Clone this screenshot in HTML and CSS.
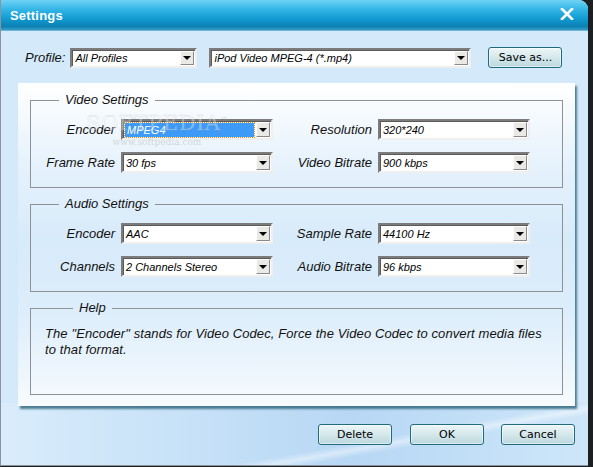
FILE: index.html
```html
<!DOCTYPE html>
<html>
<head>
<title>Settings</title>
<link rel="stylesheet" href="styles.css">
</head>
<body>

<div class="window">
  <div class="titlebar">
    <span class="title">Settings</span>
    <svg class="close" width="14" height="12" viewBox="0 0 14 12">
      <path d="M2 1 L12 11 M12 1 L2 11" stroke="#fff" stroke-width="2.6" stroke-linecap="square"/>
    </svg>
  </div>

  <div class="content">
    <div class="profile-row">
      <span class="label">Profile:</span>
      <div class="combo w-profile"><span class="value">All Profiles</span><span class="arrow"></span></div>
      <div class="combo w-preset"><span class="value">iPod Video MPEG-4 (*.mp4)</span><span class="arrow"></span></div>
      <button class="button">Save as...</button>
    </div>

    <div class="panel">
      <fieldset class="group">
        <legend>Video Settings</legend>
        <div class="grid">
          <span class="label">Encoder</span>
          <div class="combo"><span class="value selected">MPEG4</span><span class="arrow"></span></div>
          <span class="label">Resolution</span>
          <div class="combo"><span class="value">320*240</span><span class="arrow"></span></div>
          <span class="label">Frame Rate</span>
          <div class="combo"><span class="value">30 fps</span><span class="arrow"></span></div>
          <span class="label">Video Bitrate</span>
          <div class="combo"><span class="value">900 kbps</span><span class="arrow"></span></div>
        </div>
      </fieldset>

      <fieldset class="group">
        <legend>Audio Settings</legend>
        <div class="grid">
          <span class="label">Encoder</span>
          <div class="combo"><span class="value">AAC</span><span class="arrow"></span></div>
          <span class="label">Sample Rate</span>
          <div class="combo"><span class="value">44100 Hz</span><span class="arrow"></span></div>
          <span class="label">Channels</span>
          <div class="combo"><span class="value">2 Channels Stereo</span><span class="arrow"></span></div>
          <span class="label">Audio Bitrate</span>
          <div class="combo"><span class="value">96 kbps</span><span class="arrow"></span></div>
        </div>
      </fieldset>

      <fieldset class="group help">
        <legend>Help</legend>
        <p>The "Encoder" stands for Video Codec, Force the Video Codec to convert media files to that format.</p>
      </fieldset>

      <!-- watermark of the screenshot -->
      <div class="watermark">
        <span class="wm-big">SOFTPEDIA<sup>™</sup></span>
        <span class="wm-small">www.softpedia.com</span>
      </div>
    </div>

    <div class="actions">
      <button class="button">Delete</button>
      <button class="button">OK</button>
      <button class="button">Cancel</button>
    </div>
  </div>
</div>

</body>
</html>
```

FILE: styles.css
```css
body {
  margin: 0;
  background-color: #1c1f22;
  font-family: "Liberation Sans", Arial, sans-serif;
}

.window {
  width: 588px;
  height: 466px;
  box-sizing: border-box;
  border-left: 1px solid #8c9499;
  border-bottom: 1px solid #8c9499;
  border-top-right-radius: 9px;
  overflow: hidden;
  background-color: #d4eafa;
  display: flex;
  flex-direction: column;
}

.titlebar {
  height: 31px;
  flex: none;
  display: flex;
  align-items: center;
  justify-content: space-between;
  padding: 0 14px 0 9px;
  background: linear-gradient(#6fd3f6 0%, #34b6e6 30%, #129bd2 60%, #0a80b4 85%, #3b9cc6 97%, #9fd2ea 100%);
}

.title {
  color: #fff;
  font-weight: bold;
  font-size: 13px;
  letter-spacing: 0.2px;
  margin-top: -1px;
}

.close {
  display: block;
  margin-top: -3px;
}

.content {
  flex: 1;
  display: flex;
  flex-direction: column;
  background-color: #d4eafa;
  background-image:
    linear-gradient(170deg, transparent 62%, rgba(255,255,255,0.45) 66%, transparent 70%),
    linear-gradient(to right, rgba(220,238,252,0.6) 0%, rgba(160,200,240,0.55) 60%, rgba(196,224,248,0.4) 100%);
  background-size: 100% 62px, 100% 62px;
  background-position: bottom, bottom;
  background-repeat: no-repeat;
}

.label {
  font-style: italic;
  font-size: 13px;
  color: #111;
}

.profile-row {
  display: flex;
  align-items: center;
  margin-top: 16px;
  padding-left: 24px;
  height: 21px;
}

.profile-row .label {
  margin-right: 5px;
}

.w-profile {
  width: 127px;
  height: 20px !important;
}

.w-preset {
  width: 262px;
  height: 20px !important;
  margin-left: 12px;
}

.profile-row .button {
  margin-left: 17px;
}

/* combo box */
.combo {
  display: flex;
  align-items: stretch;
  height: 21px;
  box-sizing: border-box;
  border: 2px solid;
  border-color: #7c7c7c #efefef #efefef #7c7c7c;
  box-shadow: inset 1px 1px 0 #5a5a5a;
  background-color: #fff;
}

.combo .value {
  flex: 1;
  display: flex;
  align-items: center;
  padding-left: 2px;
  margin: 1px 0 0 1px;
  font-style: italic;
  font-size: 11px;
  color: #000;
  white-space: nowrap;
  overflow: hidden;
}

.combo .value.selected {
  margin: 2px 2px 1px 2px;
  padding-left: 2px;
  background-color: #3d9af6;
  color: #fff;
  outline: 1px dotted #e09030;
}

.combo .arrow {
  width: 14px;
  margin: 1px 1px 1px 0;
  box-sizing: border-box;
  border: 1px solid;
  border-color: #fdfdfd #8a8a8a #8a8a8a #fdfdfd;
  background-color: #ebe9e5;
  display: flex;
  align-items: center;
  justify-content: center;
}

.combo .arrow::after {
  content: "";
  border-left: 4px solid transparent;
  border-right: 4px solid transparent;
  border-top: 4px solid #000;
  margin-top: 1px;
}

.button {
  width: 74px;
  height: 21px;
  box-sizing: border-box;
  padding: 0;
  border: 1px solid #1f6b80;
  border-radius: 3px;
  background: linear-gradient(#edf6f7 0%, #d7e9ec 45%, #bcd8de 100%);
  box-shadow: inset 0 0 0 1px rgba(255,255,255,0.5);
  font-family: "DejaVu Sans", Tahoma, sans-serif;
  font-size: 11px;
  color: #000;
}

/* settings panel */
.panel {
  position: relative;
  margin: 15px 0 0 17px;
  width: 557px;
  height: 323px;
  box-sizing: border-box;
  padding: 9px 12px 0;
  display: flex;
  flex-direction: column;
  gap: 8px;
  background: linear-gradient(#ffffff 0%, #e6f2fc 25%, #d8ebfa 48%, #dcedfb 70%, #f7fbfe 100%);
  box-shadow: 2px 3px 2px rgba(30,90,110,0.75);
}

.group {
  margin: 0;
  padding: 11px 0 14px;
  border: 1px solid #8e9296;
  min-width: 0;
}

.group legend {
  margin-left: 28px;
  padding: 0 6px;
  font-style: italic;
  font-size: 13px;
  line-height: 16px;
  color: #111;
}

.grid {
  display: grid;
  grid-template-columns: 90px 152px 105px 152px;
  row-gap: 12px;
  align-items: center;
}

.grid .label {
  text-align: right;
  padding-right: 6px;
}

.help {
  height: 95px;
  box-sizing: border-box;
  padding: 10px 16px 0 14px;
}

.help p {
  margin: 0;
  font-style: italic;
  font-size: 13px;
  letter-spacing: 0.1px;
  line-height: 16px;
  color: #111;
}

.watermark {
  position: absolute;
  left: 68px;
  top: 26px;
  display: flex;
  flex-direction: column;
  align-items: center;
  pointer-events: none;
}

.wm-big {
  font-family: "DejaVu Serif", serif;
  font-size: 21px;
  line-height: 22px;
  letter-spacing: 0.5px;
  color: rgba(255,255,255,0.35);
  -webkit-text-stroke: 0.5px rgba(170,170,170,0.35);
}

.wm-big sup {
  font-size: 7px;
  -webkit-text-stroke: 0;
  color: rgba(170,170,170,0.45);
}

.wm-small {
  font-family: "DejaVu Serif", serif;
  font-size: 9px;
  margin-top: 3px;
  color: rgba(170,170,170,0.45);
}

.actions {
  display: flex;
  justify-content: flex-end;
  gap: 17px;
  margin-top: 18px;
  padding-right: 13px;
}

.actions .button:first-child {
  margin-right: 1px;
}
```
